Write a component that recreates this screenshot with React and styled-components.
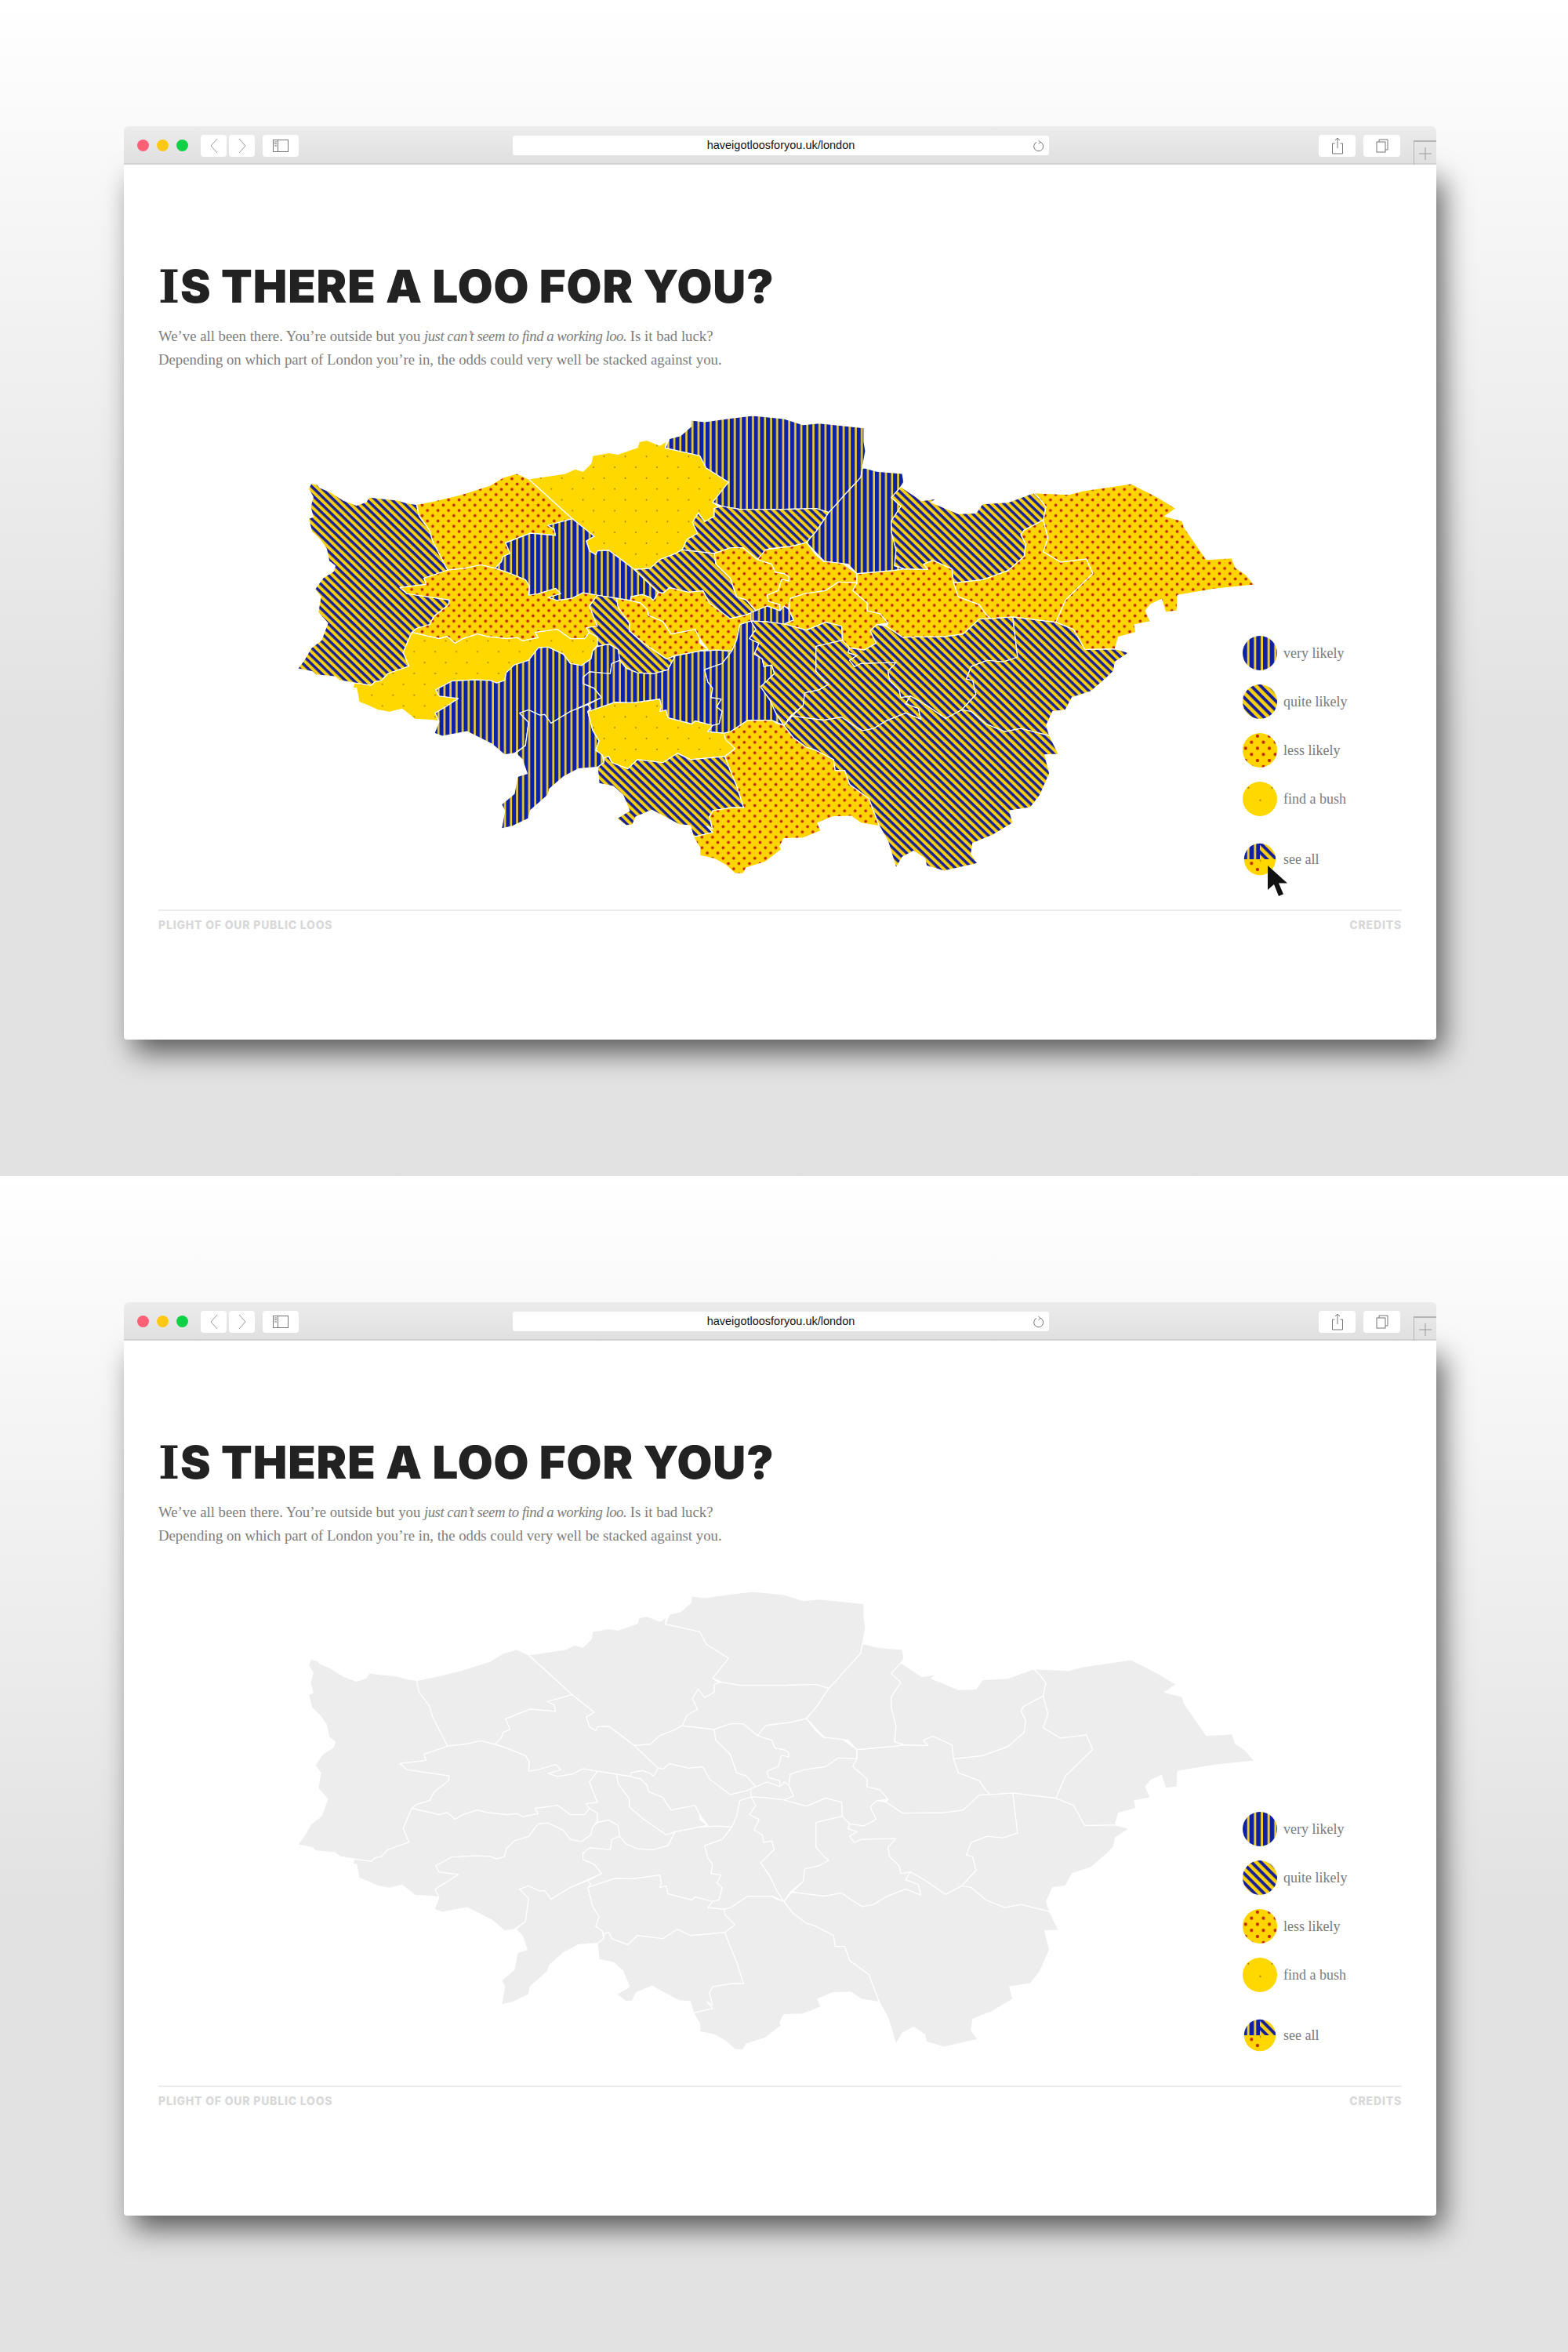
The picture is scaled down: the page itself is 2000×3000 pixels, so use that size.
import React from "react";
import styled, { createGlobalStyle } from "styled-components";

const Global = createGlobalStyle`
  html, body { margin: 0; padding: 0; background: #fff; }
`;

// map outlines, traced in a 3136x1568 space. "r" means the eastern half (x + 1568)
const REGIONS = [
  ["diag", "420,312 390,308 360,298 300,292 272,288 262,304 232,315 190,298 150,272 118,258 110,248 90,244 82,262 96,288 88,320 96,352 82,358 92,400 120,428 138,455 146,495 165,510 160,528 128,548 102,585 120,610 112,660 142,695 122,750 90,775 68,815 48,842 95,852 105,862 165,868 180,880 225,888 278,896 290,884 310,880 330,858 396,834 378,790 392,755 405,725 420,712 460,700 475,672 520,635 522,620 390,600 368,580 450,570 443,550 517,524 470,430 460,395 428,350"],
  ["dots", "420,312 470,302 560,280 650,250 690,225 732,212 770,230 906,358 830,380 850,392 854,412 775,405 698,436 712,470 690,480 685,497 665,518 620,507 570,518 517,524 470,430 460,395 428,350"],
  ["bush", "770,230 885,212 915,198 940,205 965,180 970,155 1020,145 1050,150 1110,128 1115,110 1140,105 1180,122 1200,108 1197,130 1305,155 1325,195 1395,240 1372,280 1345,305 1365,320 1350,325 1350,350 1320,368 1300,340 1282,370 1298,405 1265,425 1250,458 1230,470 1180,490 1150,518 1100,522 1060,490 1020,460 985,462 980,474 960,462 950,430 975,415 906,358"],
  ["vert", "1197,130 1210,100 1245,90 1278,60 1278,40 1320,45 1390,35 1470,25 r0,35 r60,55 r110,50 r250,65 r250,110 r255,140 r245,195 r240,225 r195,275 r165,310 r140,338 r100,325 r0,328 1430,328 1375,318 1345,305 1395,240 1325,195 1305,155"],
  ["vert", "906,358 975,415 950,430 960,462 980,474 985,462 1020,460 1100,522 1175,595 1160,622 1150,612 1125,603 1090,610 1088,622 1045,615 985,605 940,597 905,615 860,622 830,612 870,600 855,583 800,600 770,605 772,575 760,555 700,530 665,518 685,497 690,480 712,470 698,436 775,405 854,412 850,392 830,380"],
  ["dots", "517,524 570,518 620,507 665,518 700,530 760,555 772,575 770,605 800,600 855,583 870,600 830,612 860,622 905,615 940,597 985,605 960,640 985,705 950,710 960,725 945,745 900,745 860,715 790,725 800,742 750,752 735,742 700,745 640,738 610,730 565,745 540,760 515,738 490,745 405,725 420,712 460,700 475,672 520,635 522,620 390,600 368,580 450,570 443,550"],
  ["bush", "405,725 490,745 515,738 540,760 565,745 610,730 640,738 700,745 735,742 750,752 800,742 790,725 860,715 900,745 945,745 960,725 985,740 985,765 970,785 965,810 935,832 900,825 878,795 830,772 800,775 770,815 725,830 700,855 695,880 670,888 650,880 600,878 530,882 480,910 490,930 550,938 515,962 478,985 490,1012 470,1008 415,1005 375,972 335,982 298,975 270,962 240,950 232,905 220,905 225,888 278,896 290,884 310,880 330,858 396,834 378,790 392,755"],
  ["vert", "530,882 600,878 650,880 670,888 695,880 700,855 725,830 770,815 800,775 830,772 878,795 900,825 935,832 965,810 970,785 985,770 1020,762 1050,780 1055,815 1030,825 1025,858 960,852 940,870 940,890 975,905 998,935 900,980 840,1018 820,990 805,992 770,975 742,985 770,1015 760,1090 725,1115 695,1120 655,1085 578,1045 500,1060 475,1050 490,1012 478,985 515,962 550,938 490,930 480,910"],
  ["vert", "742,985 770,975 805,992 820,990 840,1018 900,980 955,958 965,970 955,980 970,1040 990,1075 980,1105 1000,1120 1005,1145 985,1160 925,1165 880,1190 835,1230 830,1250 775,1300 770,1325 720,1350 685,1358 695,1300 685,1280 725,1245 735,1190 765,1180 750,1135 730,1115 760,1090 770,1015"],
  ["bush", "955,980 1040,950 1095,952 1180,940 1185,965 1180,980 1200,975 1205,1000 1280,1020 1290,1010 1345,1025 1330,1045 1380,1050 1395,1075 1415,1100 1383,1125 1275,1135 1235,1115 1190,1145 1110,1135 1080,1165 1030,1145 1020,1125 1005,1130 1000,1120 980,1105 990,1075 970,1040"],
  ["diag", "985,1160 1005,1145 1005,1130 1020,1125 1030,1145 1080,1165 1110,1135 1190,1145 1235,1115 1275,1135 1383,1125 1400,1170 1420,1220 1442,1290 1405,1290 1345,1300 1335,1320 1345,1360 1328,1350 1345,1370 1285,1385 1275,1348 1240,1345 1155,1298 1105,1320 1095,1345 1075,1348 1045,1325 1085,1300 1065,1250 1035,1222 990,1212"],
  ["dots", "1383,1125 1415,1100 1385,1070 1380,1050 1400,1045 1455,1008 1530,1008 1545,1018 r0,1025 r30,1065 r70,1095 r100,1105 r155,1135 r160,1170 r190,1170 r205,1215 r265,1260 r298,1350 r240,1340 r210,1318 r150,1320 r105,1340 r115,1365 r60,1388 r0,1390 1555,1415 1560,1425 1535,1445 1510,1465 1450,1485 1440,1503 1415,1503 1385,1475 1350,1455 1305,1445 1305,1420 1285,1385 1345,1370 1328,1350 1345,1360 1335,1320 1345,1300 1405,1290 1442,1290 1420,1220 1400,1170"],
  ["vert", "1025,858 1030,825 1055,815 1075,840 1110,855 1160,858 1205,845 1228,800 1300,785 1360,782 1405,785 1375,825 1320,845 1330,885 1345,905 1340,935 1372,940 1358,965 1375,980 1365,1020 1345,1025 1290,1010 1280,1020 1205,1000 1200,975 1180,980 1185,965 1180,940 1095,952 1040,950 955,980 965,970 955,958 998,935 975,905 940,890 940,870 960,852"],
  ["diag", "985,605 1045,615 1050,645 1085,695 1085,720 1130,760 1200,810 1228,800 1205,845 1160,858 1110,855 1075,840 1055,815 1050,780 1020,762 985,770 985,740 960,725 950,710 985,705 960,640"],
  ["dots", "1045,615 1088,622 1120,630 1140,650 1145,670 1190,690 1215,730 1290,715 1305,745 1305,760 1330,780 1228,800 1200,810 1130,760 1085,720 1085,695 1050,645"],
  ["dots", "1088,622 1090,610 1125,603 1150,612 1160,622 1175,595 1190,598 1210,580 1270,595 1315,590 1335,630 1400,680 1450,668 1480,655 1465,688 1430,700 1420,750 1405,785 1360,782 1300,785 1330,780 1305,745 1290,715 1215,730 1190,690 1145,670 1140,650 1120,630"],
  ["diag", "1100,522 1150,518 1180,490 1230,470 1250,458 1350,470 1355,505 1400,550 1420,610 1450,620 1480,655 1450,668 1400,680 1335,630 1315,590 1270,595 1210,580 1190,598 1175,595"],
  ["diag", "1250,458 1265,425 1298,405 1282,370 1300,340 1320,368 1350,350 1350,325 1365,320 1375,318 1430,328 r0,328 r100,325 r140,338 r100,400 r70,435 r20,448 r0,450 1520,455 1485,490 1440,452 1400,452 1350,470"],
  ["dots", "1350,470 1400,452 1440,452 1485,490 1530,505 1540,530 r0,535 r15,545 r15,560 r0,555 1560,555 1550,590 1515,605 1520,625 1555,635 1555,655 1515,640 1480,655 1450,620 1420,610 1400,550 1355,505"],
  ["dots", "1485,490 1510,458 r0,450 r20,448 r70,435 r100,475 r125,497 r180,500 r228,535 r228,565 r170,562 r130,590 r65,600 r20,615 r15,650 r0,640 1555,655 1555,635 1520,625 1515,605 1550,590 1560,555 r0,555 r15,560 r15,545 r0,535 1540,530 1530,505"],
  ["vert", "1465,660 1480,655 1515,640 1555,655 r0,640 r15,650 r30,685 r0,698 1510,690 1465,688"],
  ["dots", "r228,565 r215,590 r260,630 r260,655 r300,665 r325,695 r290,700 r270,720 r288,760 r250,782 r205,775 r182,750 r180,705 r130,692 r70,718 r0,698 r30,685 r15,650 r20,615 r65,600 r130,590 r170,562"],
  ["vert", "1465,688 1480,715 1460,745 1490,760 1475,795 1500,810 1505,835 1530,830 1538,858 1495,900 1525,945 1545,990 r0,1025 1530,1008 1455,1008 1400,1045 1380,1050 1330,1045 1345,1025 1365,1020 1375,980 1358,965 1372,940 1340,935 1345,905 1330,885 1320,845 1375,825 1405,785 1420,750 1430,700"],
  ["diag", "1465,688 1510,690 r0,698 r70,718 r130,692 r180,705 r182,750 r100,770 r100,850 r130,880 r140,892 r110,910 r65,920 r60,960 r20,995 r0,1025 1545,990 1525,945 1495,900 1538,858 1530,830 1505,835 1500,810 1475,795 1490,760 1460,745 1480,715"],
  ["diag", "r182,750 r205,775 r200,790 r228,800 r205,815 r220,835 r240,825 r350,822 r325,850 r330,880 r360,910 r365,935 r395,930 r380,955 r420,970 r428,1005 r380,985 r320,1010 r280,1035 r245,1042 r210,1020 r180,998 r125,1008 r25,995 r60,960 r65,920 r110,910 r140,892 r125,880 r100,850 r100,770"],
  ["diag", "r270,720 r288,760 r250,782 r205,775 r200,790 r228,800 r205,815 r220,835 r240,825 r350,822 r325,850 r330,880 r360,910 r365,935 r395,930 r445,960 r505,1003 r555,975 r600,925 r590,880 r570,875 r585,835 r635,815 r685,820 r730,805 r715,675 r610,682 r560,730 r500,738 r370,740 r320,705 r290,700"],
  ["diag", "r715,675 r730,805 r685,820 r635,815 r585,835 r570,875 r590,880 r600,925 r555,975 r585,980 r630,1020 r690,1045 r740,1035 r830,1058 r820,1025 r840,980 r880,975 r900,935 r960,915 r1010,870 r1030,850 r1035,820 r1078,790 r1035,778 r940,780 r905,715 r850,692"],
  ["diag", "r0,1025 r25,995 r125,1008 r180,998 r210,1020 r245,1042 r280,1035 r320,1010 r380,985 r428,1005 r420,970 r380,955 r395,930 r445,960 r505,1003 r555,975 r585,980 r630,1020 r690,1045 r740,1035 r830,1058 r858,1118 r815,1120 r830,1180 r800,1250 r770,1290 r705,1300 r715,1340 r650,1380 r590,1405 r585,1440 r605,1470 r500,1495 r445,1478 r440,1455 r405,1430 r370,1450 r350,1485 r325,1400 r298,1350 r265,1260 r205,1215 r190,1170 r160,1170 r155,1135 r100,1105 r70,1095 r30,1065"],
  ["dots", "r228,535 r340,525 r375,520 r450,522 r435,505 r465,492 r525,520 r530,565 r545,610 r610,635 r630,665 r645,680 r610,682 r560,730 r500,738 r370,740 r320,705 r325,695 r300,665 r260,655 r260,630 r215,590 r228,565"],
  ["dots", "r810,362 r825,420 r810,465 r865,498 r945,488 r965,535 r925,575 r880,620 r850,692 r715,675 r645,680 r630,665 r610,635 r545,610 r530,565 r620,555 r700,525 r750,480 r755,440 r740,410 r750,395"],
  ["dots", "r780,275 r890,280 r935,268 r1085,245 r1170,290 r1225,325 r1190,350 r1245,365 r1250,385 r1320,490 r1400,485 r1410,515 r1445,540 r1470,572 r1345,585 r1230,605 r1228,655 r1192,660 r1180,618 r1145,635 r1130,655 r1145,690 r1095,700 r1100,725 r1045,740 r1035,778 r940,780 r905,715 r850,692 r880,620 r925,575 r965,535 r945,488 r865,498 r810,465 r825,420 r810,362 r818,320 r800,295"],
  ["diag", "r365,255 r430,300 r480,293 r460,305 r545,342 r600,340 r620,310 r700,305 r780,275 r800,295 r818,320 r810,362 r750,395 r740,410 r755,440 r750,480 r700,525 r620,555 r530,565 r525,520 r465,492 r435,505 r450,522 r375,520 r345,510 r350,460 r335,400 r335,365 r365,318 r335,290"],
  ["vert", "r245,195 r255,195 r290,205 r370,212 r375,240 r365,255 r335,290 r365,318 r335,365 r335,400 r350,460 r345,510 r375,520 r340,525 r228,535 r200,505 r125,495 r70,435 r100,400 r140,338 r165,310 r195,275 r240,225"],
];

const toPoints = (line) =>
  line
    .split(" ")
    .map((p) => {
      if (p[0] !== "r") return p;
      const [x, y] = p.slice(1).split(",");
      return `${Number(x) + 1568},${y}`;
    })
    .join(" ");

const LEGEND = [
  { id: "vert", label: "very likely" },
  { id: "diag", label: "quite likely" },
  { id: "dots", label: "less likely" },
  { id: "bush", label: "find a bush" },
];

function Patterns() {
  return (
    <HiddenDefs aria-hidden="true">
      <defs>
        <pattern id="vert" width="18.900" height="19" patternUnits="userSpaceOnUse">
          <rect width="18.900" height="19" fill="#0c21a6" />
          <rect x="12.400" width="6.500" height="19" fill="#eccb2c" />
        </pattern>
        <pattern id="diag" width="18.400" height="18.400" patternUnits="userSpaceOnUse" patternTransform="rotate(45)">
          <rect width="18.400" height="18.400" fill="#f9d00f" />
          <rect width="18.400" height="8.600" fill="#161f96" />
        </pattern>
        <pattern id="dots" width="33" height="34" patternUnits="userSpaceOnUse">
          <rect width="33" height="34" fill="#ffd500" />
          <circle cx="8.250" cy="8.500" r="4.600" fill="#bd2a0e" />
          <circle cx="24.750" cy="25.500" r="4.600" fill="#bd2a0e" />
        </pattern>
        <pattern id="bush" width="66" height="70" patternUnits="userSpaceOnUse">
          <rect width="66" height="70" fill="#ffd800" />
          <circle cx="16" cy="17" r="2.200" fill="#9c5a10" />
          <circle cx="49" cy="52" r="2.200" fill="#9c5a10" />
        </pattern>
        <clipPath id="swatch-clip">
          <circle cx="48" cy="48" r="44" />
        </clipPath>
      </defs>
    </HiddenDefs>
  );
}

function LondonMap({ coloured }) {
  return (
    <MapSvg viewBox="0 0 3136 1568" preserveAspectRatio="none">
      {REGIONS.map(([kind, line], i) => (
        <polygon
          key={i}
          points={toPoints(line)}
          fill={coloured ? `url(#${kind})` : "#ededed"}
          stroke="#fff"
          strokeWidth="3"
          strokeLinejoin="round"
        />
      ))}
    </MapSvg>
  );
}

function SeeAllSwatch() {
  return (
    <SwatchSvg viewBox="0 0 96 96">
      <g clipPath="url(#swatch-clip)">
        <rect width="48" height="48" fill="url(#vert)" />
        <rect x="48" width="48" height="48" fill="url(#diag)" />
        <rect y="48" width="48" height="48" fill="url(#dots)" />
        <rect x="48" y="48" width="48" height="48" fill="url(#bush)" />
      </g>
    </SwatchSvg>
  );
}

function Chrome() {
  return (
    <Bar>
      <Lights>
        <Light $c="#fc6076" />
        <Light $c="#fdc814" />
        <Light $c="#0ed145" />
      </Lights>
      <NavGroup>
        <ToolBtn $w={33}>
          <svg width="12" height="22" viewBox="0 0 12 22" fill="none" stroke="#999" strokeWidth="1">
            <path d="M10 2 2 11l8 9" />
          </svg>
        </ToolBtn>
        <ToolBtn $w={33}>
          <svg width="12" height="22" viewBox="0 0 12 22" fill="none" stroke="#999" strokeWidth="1">
            <path d="m2 2 8 9-8 9" />
          </svg>
        </ToolBtn>
      </NavGroup>
      <ToolBtn $w={46}>
        <svg width="20" height="16" viewBox="0 0 20 16" fill="none" stroke="#777" strokeWidth="1">
          <rect x="0.5" y="0.5" width="19" height="15" />
          <path d="M6.500 0.500v15M2 3h3M2 5.500h3M2 8h3" />
        </svg>
      </ToolBtn>
      <Address>
        haveigotloosforyou.uk/london
        <Reload width="14" height="16" viewBox="0 0 14 16" fill="none" stroke="#777" strokeWidth="1">
          <path d="M9 3.200A6 6 0 1 1 4 3.400" />
          <path d="M6.500 1 9 3.200 6.800 5.600" />
        </Reload>
      </Address>
      <RightTools>
        <ToolBtn $w={47}>
          <svg width="16" height="22" viewBox="0 0 16 22" fill="none" stroke="#777" strokeWidth="1">
            <path d="M4.500 8H1.500v13h13V8h-3M8 14V1M5 4l3-3 3 3" />
          </svg>
        </ToolBtn>
        <ToolBtn $w={47}>
          <svg width="16" height="18" viewBox="0 0 16 18" fill="none" stroke="#777" strokeWidth="1">
            <rect x="1" y="4" width="11" height="13" />
            <path d="M4 4V1h11v13h-3" />
          </svg>
        </ToolBtn>
      </RightTools>
      <NewTab>
        <svg width="16" height="16" viewBox="0 0 16 16" fill="none" stroke="#999" strokeWidth="1">
          <path d="M8 0v16M0 8h16" />
        </svg>
      </NewTab>
    </Bar>
  );
}

function Screen({ coloured }) {
  return (
    <Panel>
      <Browser>
        <Chrome />
        <Page>
          <Title>
            <SlabI>I</SlabI>S THERE A LOO FOR YOU?
          </Title>
          <Intro>
            We’ve all been there. You’re outside but you <IntroEm>just can’t seem to find a working loo.</IntroEm> Is it bad luck?
            <br />
            Depending on which part of London you’re in, the odds could very well be stacked against you.
          </Intro>
          <Stage>
            <LondonMap coloured={coloured} />
            <Legend>
              {LEGEND.map((item) => (
                <LegendRow key={item.id}>
                  <SwatchSvg viewBox="0 0 96 96">
                    <circle cx="48" cy="48" r="48" fill={`url(#${item.id})`} />
                  </SwatchSvg>
                  <LegendLabel>{item.label}</LegendLabel>
                </LegendRow>
              ))}
              <SeeAllRow>
                <SeeAllSwatch />
                <LegendLabel>see all</LegendLabel>
                {coloured && (
                  <Pointer width="25" height="40" viewBox="0 0 25 40">
                    <path d="M0 0v31l8-7 6 15 6-2.500-6-14h11z" fill="#111" />
                  </Pointer>
                )}
              </SeeAllRow>
            </Legend>
          </Stage>
          <Footer>
            <span>PLIGHT OF OUR PUBLIC LOOS</span>
            <span>CREDITS</span>
          </Footer>
        </Page>
      </Browser>
    </Panel>
  );
}

export default function App() {
  return (
    <>
      <Global />
      <Patterns />
      <Screen coloured />
      <Screen />
    </>
  );
}

const HiddenDefs = styled.svg`
  position: absolute;
  width: 0;
  height: 0;
`;

const Panel = styled.section`
  width: 2000px;
  height: 1500px;
  box-sizing: border-box;
  padding: 161px 168px 0 158px;
  background: linear-gradient(180deg, #ffffff 0%, #f6f6f6 18%, #e2e2e2 62%, #e2e2e2 100%);
  overflow: hidden;
`;

const Browser = styled.div`
  width: 1674px;
  height: 1165px;
  display: flex;
  flex-direction: column;
`;

const Bar = styled.div`
  position: relative;
  z-index: 2;
  height: 49px;
  flex: none;
  box-sizing: border-box;
  padding: 11px 0 0 17px;
  display: flex;
  align-items: flex-start;
  background: linear-gradient(180deg, #ececec 0%, #e0e0e0 100%);
  border-bottom: 2px solid #d2d2d2;
  border-radius: 6px 6px 0 0;
`;

const Lights = styled.div`
  display: flex;
  gap: 10px;
  padding-top: 6px;
`;

const Light = styled.div`
  width: 15px;
  height: 15px;
  border-radius: 50%;
  background: ${(p) => p.$c};
`;

const NavGroup = styled.div`
  display: flex;
  gap: 3px;
  margin: 0 10px 0 16px;
`;

const ToolBtn = styled.div`
  width: ${(p) => p.$w}px;
  height: 28px;
  display: flex;
  align-items: center;
  justify-content: center;
  background: #fff;
  border-radius: 4px;
`;

const Address = styled.div`
  position: relative;
  width: 684px;
  height: 25px;
  margin: 1px 0 0 273px;
  background: #fff;
  border-radius: 3px;
  text-align: center;
  font: 14.500px/25px "Liberation Sans", Arial, sans-serif;
  color: #111;
`;

const Reload = styled.svg`
  position: absolute;
  right: 6px;
  top: 5px;
`;

const RightTools = styled.div`
  display: flex;
  gap: 10px;
  margin-left: 344px;
`;

const NewTab = styled.div`
  position: absolute;
  right: 0;
  top: 18px;
  width: 29px;
  height: 31px;
  box-sizing: border-box;
  display: flex;
  align-items: center;
  justify-content: center;
  border-top: 2px solid #b4b4b4;
  border-left: 1px solid #b4b4b4;
`;

const Page = styled.main`
  position: relative;
  flex: 1;
  box-sizing: border-box;
  padding: 120px 44px 0;
  background: #fff;
  border-radius: 0 0 4px 4px;
  box-shadow: 10px 18px 36px -2px rgba(0, 0, 0, 0.62);
`;

const Title = styled.h1`
  margin: 0;
  height: 70px;
  font: 900 58px/70px Inter, "Liberation Sans", sans-serif;
  letter-spacing: 0.900px;
  color: #222;
  white-space: nowrap;
`;

const SlabI = styled.span`
  font-family: "DejaVu Serif", serif;
  font-weight: 700;
`;

const Intro = styled.p`
  margin: 14px 0 0;
  font: 18.750px/30px "Liberation Serif", "Times New Roman", serif;
  color: #7d7d7d;
  white-space: nowrap;
`;

const IntroEm = styled.em`
  letter-spacing: -0.500px;
`;

const Stage = styled.div`
  display: grid;
  grid-template-columns: 1225px auto;
  height: 640px;
  margin-top: 46px;
  padding-left: 158px;
`;

const MapSvg = styled.svg`
  width: 1280px;
  height: 620px;
  display: block;
  overflow: visible;
`;

const Legend = styled.div`
  position: relative;
  align-self: end;
  display: flex;
  flex-direction: column;
  gap: 18px;
  padding-bottom: 42px;
`;

const LegendRow = styled.div`
  display: flex;
  align-items: center;
  gap: 8px;
  height: 44px;
`;

const SeeAllRow = styled(LegendRow)`
  position: relative;
  margin-top: 15px;
`;

const SwatchSvg = styled.svg`
  width: 44px;
  height: 44px;
  flex: none;
  display: block;
`;

const LegendLabel = styled.span`
  font: 18px/24px "Liberation Serif", "Times New Roman", serif;
  color: #7b7b7b;
  white-space: nowrap;
`;

const Pointer = styled.svg`
  position: absolute;
  left: 32px;
  top: 30px;
`;

const Footer = styled.footer`
  display: flex;
  justify-content: space-between;
  padding-top: 10px;
  border-top: 2px solid #ececec;
  font: 800 14px/16px Inter, "Liberation Sans", sans-serif;
  letter-spacing: 0.800px;
  color: #d8d8d8;
`;
